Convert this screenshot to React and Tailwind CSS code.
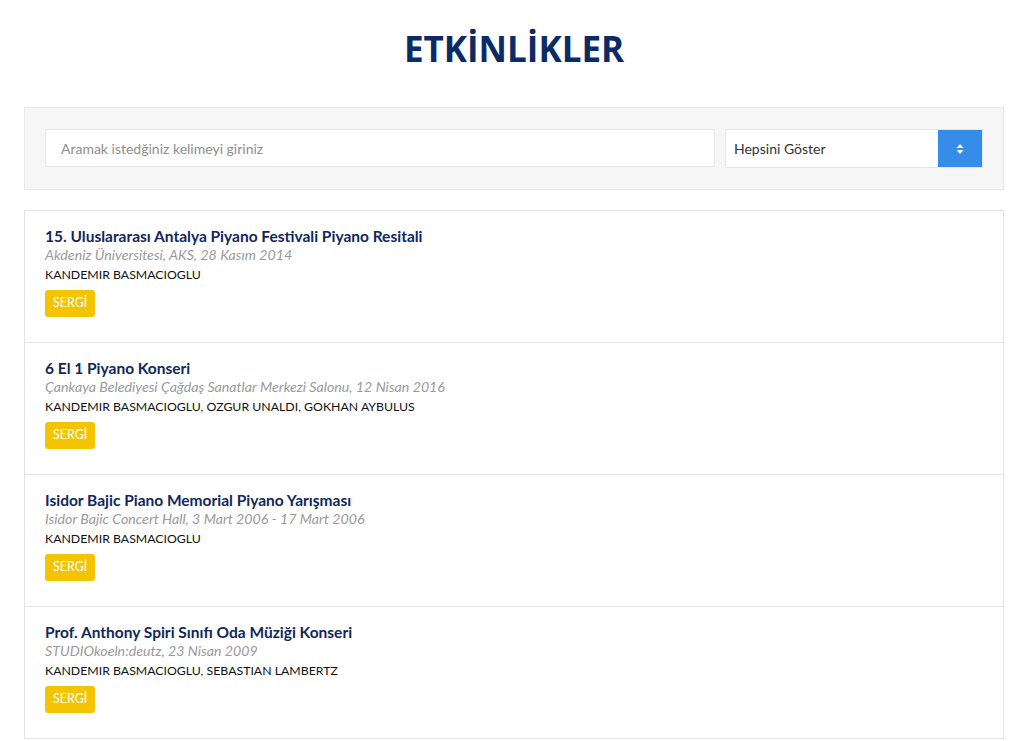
const events = [
  {
    title: '15. Uluslararası Antalya Piyano Festivali Piyano Resitali',
    place: 'Akdeniz Üniversitesi, AKS, 28 Kasım 2014',
    people: 'KANDEMIR BASMACIOGLU',
  },
  {
    title: '6 El 1 Piyano Konseri',
    place: 'Çankaya Belediyesi Çağdaş Sanatlar Merkezi Salonu, 12 Nisan 2016',
    people: 'KANDEMIR BASMACIOGLU, OZGUR UNALDI, GOKHAN AYBULUS',
  },
  {
    title: 'Isidor Bajic Piano Memorial Piyano Yarışması',
    place: 'Isidor Bajic Concert Hall, 3 Mart 2006 - 17 Mart 2006',
    people: 'KANDEMIR BASMACIOGLU',
  },
  {
    title: 'Prof. Anthony Spiri Sınıfı Oda Müziği Konseri',
    place: 'STUDIOkoeln:deutz, 23 Nisan 2009',
    people: 'KANDEMIR BASMACIOGLU, SEBASTIAN LAMBERTZ',
  },
]

function EventRow({ title, place, people }) {
  return (
    <div className="border-t border-[#e3e3e3] first:border-t-0 px-5 pt-[15px] pb-[25px]">
      <h3 className="text-[15.5px] leading-5 font-bold text-[#10285c]">{title}</h3>
      <p className="text-[14.2px] leading-[18px] italic text-[#9a9a9a]">{place}</p>
      <p className="mt-[2px] text-[12.3px] leading-[18px] text-[#111]">{people}</p>
      <span className="mt-[6px] inline-flex h-[27px] items-center rounded-[3px] bg-[#f5c400] px-[8px] text-[12.5px] text-white">
        SERGİ
      </span>
    </div>
  )
}

export default function App() {
  return (
    <div className="min-h-screen bg-white font-['Lato','Noto_Sans',sans-serif]">
      <div className="mx-[24px] w-[980px]">
        <h1 className="pt-[29px] pb-[38px] text-center text-[35px] leading-[40px] font-bold text-[#0b2b66] font-['Open_Sans',sans-serif]">
          ETKİNLİKLER
        </h1>

        <div className="flex gap-[10px] border border-[#e9e9e9] bg-[#f6f6f6] px-5 py-[21px]">
          <input
            type="text"
            placeholder="Aramak istedğiniz kelimeyi giriniz"
            className="h-[38px] flex-1 border border-[#e6e6e6] bg-white px-[15px] text-[14px] text-[#333] outline-none placeholder:text-[#8e8e8e]"
          />
          <div className="flex h-[39px] w-[258px] items-stretch border border-[#e6e6e6] bg-white">
            <span className="flex flex-1 items-center px-[8px] text-[14px] text-[#333]">Hepsini Göster</span>
            <span className="flex w-[44px] items-center justify-center bg-[#368de9]">
              <svg width="8" height="12" viewBox="0 0 8 12" fill="white">
                <path d="M4 1 L7.5 5 H0.5 Z" />
                <path d="M4 11 L7.5 7 H0.5 Z" />
              </svg>
            </span>
          </div>
        </div>

        <div className="mt-5 border border-[#e3e3e3]">
          {events.map((e) => (
            <EventRow key={e.title} {...e} />
          ))}
        </div>
      </div>
    </div>
  )
}
